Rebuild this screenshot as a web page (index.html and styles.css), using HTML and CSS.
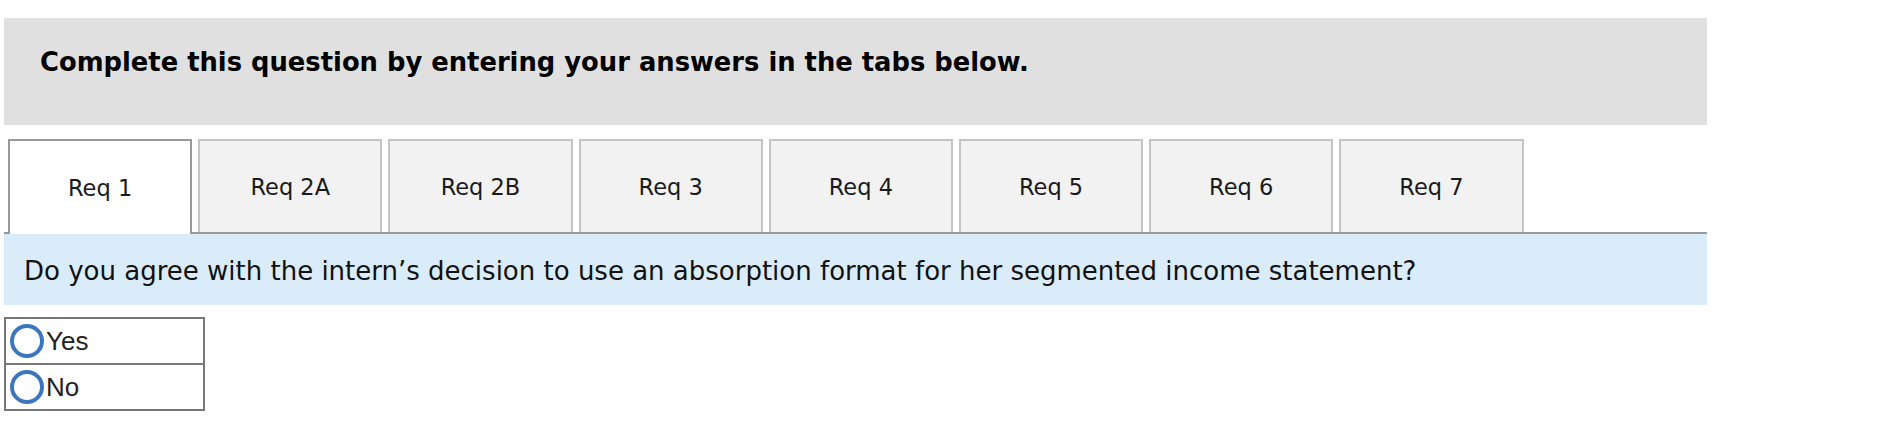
FILE: index.html
```html
<!DOCTYPE html>
<html>
<head>
	<meta charset="utf-8">
	<title>Req 1</title>
	<link rel="stylesheet" href="styles.css">
</head>
<body>
	<div class="wrap">

		<!-- instructions -->
		<div class="instr">Complete this question by entering your answers in the tabs below.</div>

		<!-- tabs -->
		<div class="tabs">
			<div class="tab active">Req 1</div>
			<div class="tab">Req 2A</div>
			<div class="tab">Req 2B</div>
			<div class="tab">Req 3</div>
			<div class="tab">Req 4</div>
			<div class="tab">Req 5</div>
			<div class="tab">Req 6</div>
			<div class="tab">Req 7</div>
		</div>

		<!-- question -->
		<div class="question">Do you agree with the intern’s decision to use an absorption format for her segmented income statement?</div>

		<!-- choices -->
		<table class="choices">
			<tr><td><label class="opt"><span class="radio"></span>Yes</label></td></tr>
			<tr><td><label class="opt"><span class="radio"></span>No</label></td></tr>
		</table>
	</div>
</body>
</html>
```

FILE: styles.css
```css
* {
	margin: 0;
	padding: 0;
	box-sizing: border-box;
}

body {
	font-family: "DejaVu Sans", Verdana, sans-serif;
	color: #000;
	background: #fff;
}

.wrap {
	width: 1707px;
	padding: 18px 0 0 4px;
}

/* gray instruction bar */
.instr {
	height: 107px;
	background-color: #e0e0e0;
	padding: 29px 0 0 36px;
	font-weight: bold;
	font-size: 25.8px;
	line-height: 30px;
}

/* tab strip */
.tabs {
	margin-top: 14px;
	padding-left: 4px;
	display: flex;
	gap: 6px;
	border-bottom: 2px solid #999;
}

.tab {
	width: 184.2px;
	height: 93px;
	background-color: #f2f2f2;
	border: 2px solid #c4c4c4;
	border-bottom: none;
	display: flex;
	justify-content: center;
	align-items: center;
	font-size: 22.5px;
	color: #1a1a1a;
}

.tab.active {
	background-color: #fff;
	border-color: #999;
	height: 95px;
	margin-bottom: -2px;
}

/* question bar */
.question {
	height: 71px;
	background-color: #daecf9;
	padding: 3px 0 0 20px;
	display: flex;
	align-items: center;
	font-size: 26px;
	color: #111;
}

/* yes / no */
.choices {
	margin-top: 12px;
	width: 201px;
	border-collapse: collapse;
	font-family: "Liberation Sans", Arial, sans-serif;
	font-size: 26px;
	color: #222;
}

.choices td {
	border: 2px solid #777;
	height: 46px;
	padding: 0 0 0 4px;
}

.opt {
	display: flex;
	align-items: center;
}

.radio {
	width: 34px;
	height: 34px;
	border: 4px solid #3b76be;
	border-radius: 50%;
	margin-right: 2px;
}
```
